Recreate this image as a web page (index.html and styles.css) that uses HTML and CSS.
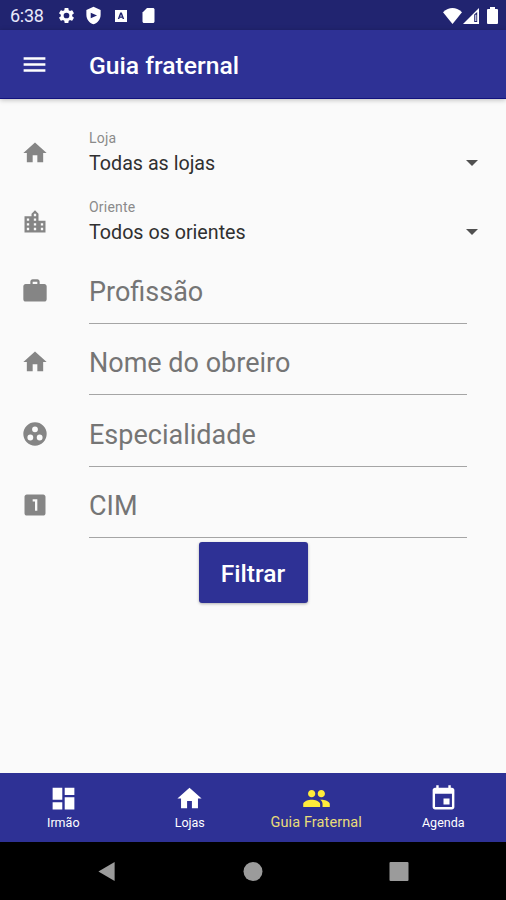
FILE: index.html
```html
<!DOCTYPE html>
<html lang="pt-BR">
<head>
<meta charset="utf-8">
<title>Guia fraternal</title>
<link rel="stylesheet" href="styles.css">
</head>
<body>
<svg width="0" height="0" class="defs">
  <symbol id="home" viewBox="0 0 24 24"><path d="M10 20v-6h4v6h5v-8h3L12 3 2 12h3v8z"/></symbol>
</svg>
<div class="screen">
  <div class="status">
    <span class="clock">6:38</span>
    <svg class="s-gear" viewBox="0 0 24 24"><path d="M19.14 12.94c.04-.3.06-.61.06-.94s-.02-.64-.07-.94l2.03-1.58a.49.49 0 0 0 .12-.61l-1.92-3.32a.49.49 0 0 0-.59-.22l-2.39.96c-.5-.38-1.03-.7-1.62-.94l-.36-2.54a.48.48 0 0 0-.48-.41h-3.84c-.24 0-.43.17-.47.41l-.36 2.54c-.59.24-1.13.57-1.62.94l-2.39-.96a.48.48 0 0 0-.59.22L2.74 8.87a.48.48 0 0 0 .12.61l2.03 1.58c-.05.3-.09.63-.09.94s.02.64.07.94l-2.03 1.58a.49.49 0 0 0-.12.61l1.92 3.32c.12.22.37.29.59.22l2.39-.96c.5.38 1.03.7 1.62.94l.36 2.54c.05.24.24.41.48.41h3.84c.24 0 .44-.17.47-.41l.36-2.54c.59-.24 1.13-.56 1.62-.94l2.39.96c.22.08.47 0 .59-.22l1.92-3.32a.48.48 0 0 0-.12-.61zM12 15.6a3.6 3.6 0 1 1 0-7.2 3.6 3.6 0 0 1 0 7.2z"/></svg>
    <svg class="s-shield" viewBox="0 0 24 24"><path fill-rule="evenodd" d="M12 1 3 5v6c0 5.55 3.84 10.74 9 12 5.16-1.26 9-6.45 9-12V5zM8.500 8.500v7l8-3.500z"/></svg>
    <svg class="s-box" viewBox="0 0 12 12"><path fill-rule="evenodd" d="M0 0h12v12H0zM5.2 2.5 2.8 9h1.5L6 4.6 7.7 9h1.5L6.8 2.5zM5.2 6.6h1.6V8H5.2z"/></svg>
    <svg class="s-card" viewBox="0 0 16 20"><path d="M14 0H6L0 6v12c0 1.100.9 2 2 2h12c1.100 0 2-.9 2-2V2c0-1.100-.9-2-2-2z"/></svg>
    <span class="grow"></span>
    <svg class="s-wifi" viewBox="0 0 19 16"><path d="M0 4.200Q9.500-4 19 4.200L9.500 16z"/></svg>
    <svg class="s-signal" viewBox="0 0 16 16"><path fill-rule="evenodd" d="M16 0v16H0zM11.200 6.500v7.500h3V4z"/><path d="M12.300 6.800h1v6.200h-1z"/></svg>
    <svg class="s-battery" viewBox="0 0 11 17"><path d="M3 0h5v2h2q1 0 1 1v13q0 1-1 1H1q-1 0-1-1V3q0-1 1-1h2z"/></svg>
  </div>
  <header class="appbar">
    <svg class="menu" viewBox="0 0 24 24"><path d="M3 18h18v-2H3zm0-5h18v-2H3zm0-7v2h18V6z"/></svg>
    <h1>Guia fraternal</h1>
  </header>
  <main class="form">
    <div class="row select">
      <svg class="icon"><use href="#home"/></svg>
      <div class="body"><span class="label">Loja</span><span class="value">Todas as lojas</span></div>
      <span class="caret"></span>
    </div>
    <div class="row select">
      <svg class="icon" viewBox="0 0 24 24"><path d="M15 11V5l-3-3-3 3v2H3v14h18V11zm-8 8H5v-2h2zm0-4H5v-2h2zm0-4H5V9h2zm6 8h-2v-2h2zm0-4h-2v-2h2zm0-4h-2V9h2zm0-4h-2V5h2zm6 12h-2v-2h2zm0-4h-2v-2h2z"/></svg>
      <div class="body"><span class="label">Oriente</span><span class="value">Todos os orientes</span></div>
      <span class="caret"></span>
    </div>
    <div class="row field">
      <svg class="icon" viewBox="0 0 24 24"><path d="M20 6h-4V4c0-1.110-.89-2-2-2h-4c-1.110 0-2 .89-2 2v2H4c-1.110 0-2 .89-2 2v11c0 1.110.89 2 2 2h16c1.110 0 2-.89 2-2V8c0-1.110-.89-2-2-2zm-6 0h-4V4h4z"/></svg>
      <div class="input">Profissão</div>
    </div>
    <div class="row field">
      <svg class="icon"><use href="#home"/></svg>
      <div class="input">Nome do obreiro</div>
    </div>
    <div class="row field">
      <svg class="icon" viewBox="0 0 24 24"><path fill-rule="evenodd" d="M12 2a10 10 0 1 0 0 20 10 10 0 0 0 0-20zM8 17.500a2.500 2.500 0 1 1 0-5 2.500 2.500 0 0 1 0 5zM9.500 8a2.500 2.500 0 1 1 5 0 2.500 2.500 0 0 1-5 0zm6.500 9.500a2.500 2.500 0 1 1 0-5 2.500 2.500 0 0 1 0 5z"/></svg>
      <div class="input">Especialidade</div>
    </div>
    <div class="row field">
      <svg class="icon" viewBox="0 0 24 24"><path d="M19 3H5c-1.100 0-2 .9-2 2v14c0 1.100.9 2 2 2h14c1.100 0 2-.9 2-2V5c0-1.100-.9-2-2-2zm-5 14h-2V9h-2V7h4z"/></svg>
      <div class="input">CIM</div>
    </div>
    <button class="filter">Filtrar</button>
  </main>
  <nav class="tabs">
    <div class="tab"><svg viewBox="0 0 24 24"><path d="M3 13h8V3H3zm0 8h8v-6H3zm10 0h8V11h-8zm0-18v6h8V3z"/></svg><span>Irmão</span></div>
    <div class="tab"><svg><use href="#home"/></svg><span>Lojas</span></div>
    <div class="tab active"><svg viewBox="0 0 24 24"><path d="M16 11c1.660 0 2.990-1.340 2.990-3S17.660 5 16 5s-3 1.340-3 3 1.340 3 3 3zm-8 0c1.660 0 2.990-1.340 2.990-3S9.660 5 8 5 5 6.340 5 8s1.340 3 3 3zm0 2c-2.330 0-7 1.170-7 3.500V19h14v-2.500C15 14.170 10.330 13 8 13zm8 0c-.29 0-.62.020-.97.050 1.160.84 1.970 1.970 1.970 3.450V19h6v-2.500c0-2.330-4.670-3.500-7-3.500z"/></svg><span>Guia Fraternal</span></div>
    <div class="tab"><svg viewBox="0 0 24 24"><path d="M17 12h-5v5h5zM16 1v2H8V1H6v2H5c-1.110 0-1.990.9-1.990 2L3 19c0 1.100.89 2 2 2h14c1.100 0 2-.9 2-2V5c0-1.100-.9-2-2-2h-1V1zm3 18H5V8h14z"/></svg><span>Agenda</span></div>
  </nav>
  <div class="system">
    <svg viewBox="0 0 20 22"><path d="M18 1v20L1 11z"/></svg>
    <svg viewBox="0 0 20 20"><circle cx="10" cy="10" r="9.500"/></svg>
    <svg viewBox="0 0 20 20"><rect x=".5" y=".5" width="19" height="19" rx="1"/></svg>
  </div>
</div>
</body>
</html>
```
FILE: styles.css
```css
* { box-sizing: border-box; }
body { margin: 0; font-family: Roboto, sans-serif; background: #fafafa; }
svg { display: block; fill: currentColor; flex: none; }
.defs { position: absolute; }
.screen { width: 506px; height: 900px; display: flex; flex-direction: column; overflow: hidden; }
.status { height: 30px; background: #212470; color: #fff; display: flex; align-items: center; padding: 1px 8px 0 10px; flex: none; }
.clock { font-size: 18px; width: 47px; letter-spacing: -0.3px; color: #e8e8fa; }
.s-gear { width: 19px; height: 19px; }
.s-shield { width: 19px; height: 19px; margin-left: 8px; }
.s-box { width: 12px; height: 12px; margin-left: 12px; }
.s-card { width: 13px; height: 15px; margin-left: 15px; }
.grow { flex: 1; }
.s-wifi { width: 19px; height: 16px; }
.s-signal { width: 16px; height: 16px; margin-left: 1px; }
.s-battery { width: 11px; height: 17px; margin-left: 8px; }
.appbar { height: 69px; flex: none; background: #2e3195; border-bottom: 1px solid #12127e; color: #fff; display: flex; align-items: center; padding: 1px 20px 0; box-shadow: 0 1px 5px rgba(0,0,0,.25); }
.menu { width: 29px; height: 29px; margin: 0 40px 0 0; }
h1 { margin: 1px 0 0; font-size: 24.700px; font-weight: 500; }
.form { flex: 1; padding-top: 20px; display: flex; flex-direction: column; }
.row { display: flex; flex: none; padding-left: 21px; }
.icon { width: 28px; height: 28px; color: #858585; margin-right: 40px; }
.select { height: 68.500px; align-items: center; }
.body { flex: 1; display: flex; flex-direction: column; padding-top: 1px; }
.label { font-size: 14px; line-height: 20px; letter-spacing: .2px; color: #8a8a8a; }
.value { font-size: 19.700px; line-height: 31px; color: #303030; }
.caret { border: 6px solid transparent; border-top-color: #505050; border-bottom: 0; margin: 20px 28px 0 0; }
.field { height: 71.300px; align-items: center; }
.field .icon { margin-bottom: 1px; }
.input { width: 378px; height: 64px; align-self: flex-start; margin-top: 4px; border-bottom: 1px solid #a5a5a5; font-size: 27px; line-height: 64px; color: #757575; }
.filter { align-self: center; width: 109px; height: 61px; flex: none; margin-top: 1px; padding: 2px 0 0; border: 0; border-radius: 3px; background: #2e3195; color: #fff; font: 500 24.600px Roboto, sans-serif; box-shadow: 0 1px 3px rgba(0,0,0,.3); }
.tabs { height: 69px; flex: none; display: grid; grid-template-columns: repeat(4, 1fr); background: #2e3195; color: #fff; }
.tab { display: flex; flex-direction: column; align-items: center; padding-top: 11px; font-size: 12.500px; line-height: 18px; }
.tab svg { width: 29px; height: 29px; }
.tab span { margin-top: 1px; }
.tab:last-child { padding-left: 1px; }
.active { color: #ffeb3b; font-size: 14.500px; }
.active span { letter-spacing: .1px; color: #e9dc79; }
.system { height: 58px; flex: none; background: #000; color: #9b9b9b; display: flex; justify-content: center; align-items: center; gap: 126px; }
.system svg { width: 20px; height: 21px; }
```
